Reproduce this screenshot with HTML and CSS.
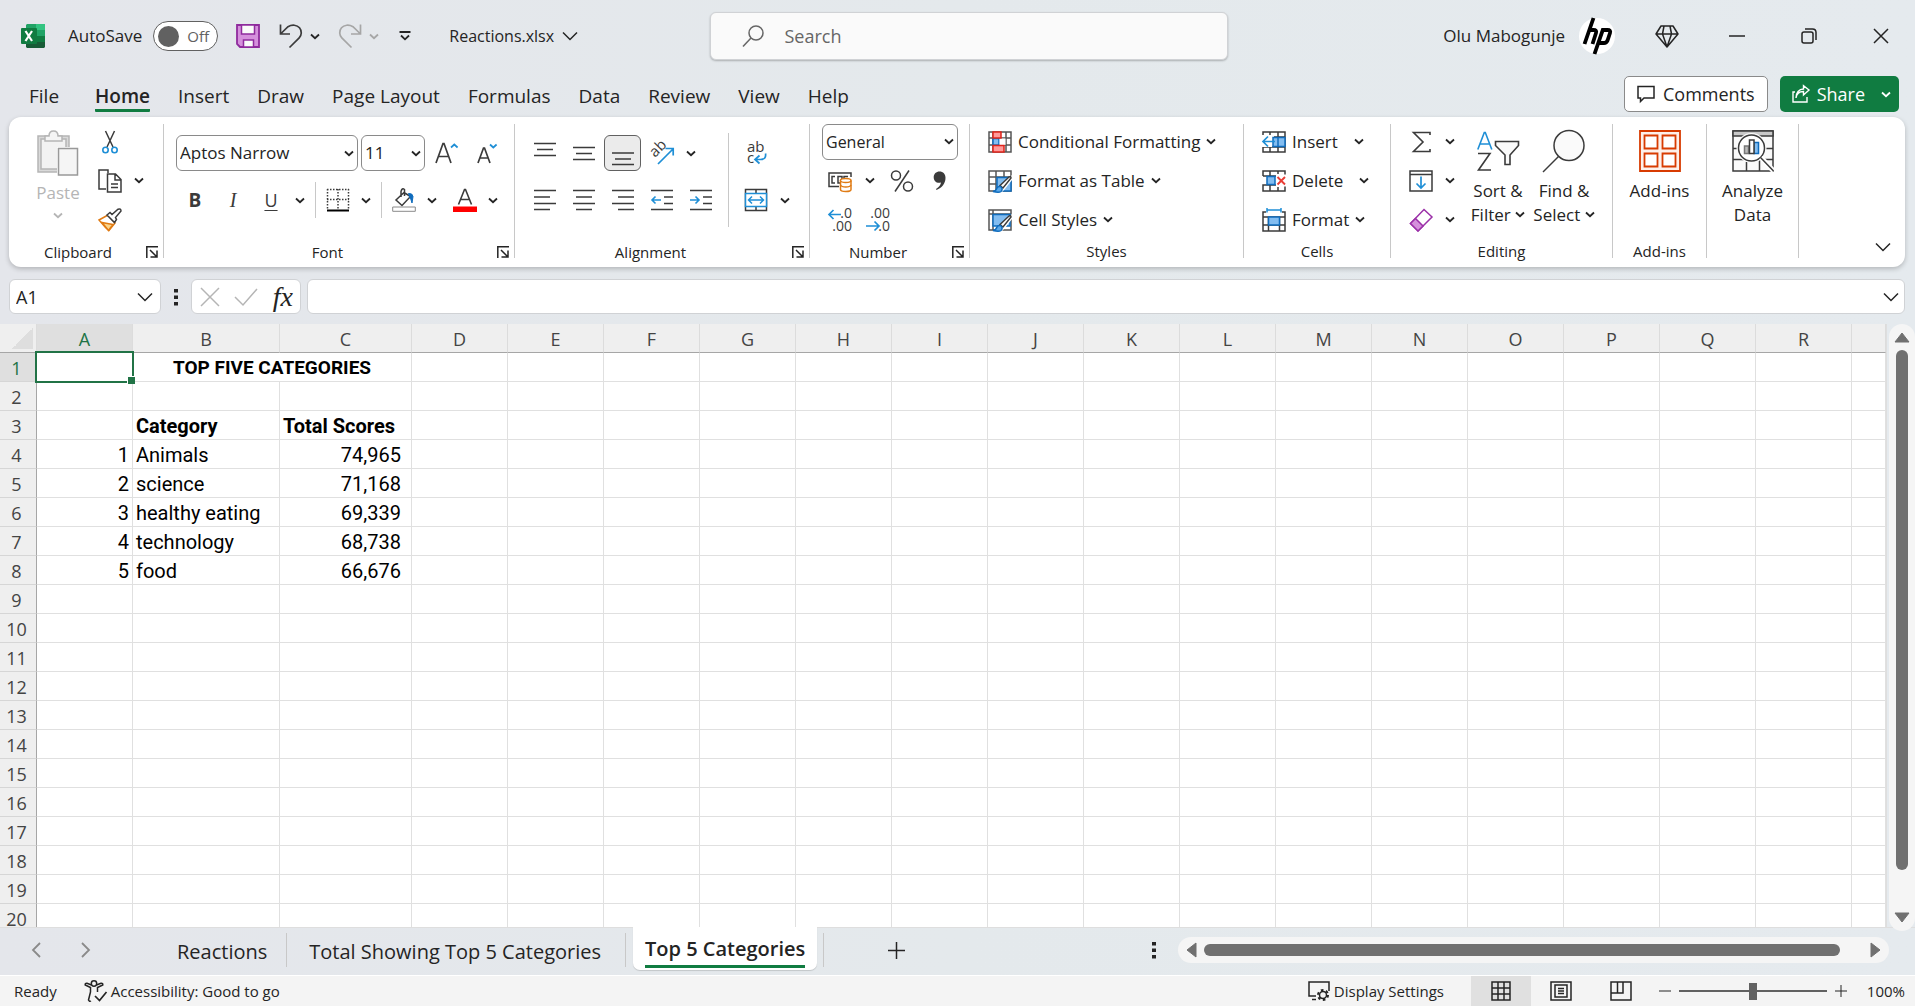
FILE: index.html
```html
<!DOCTYPE html>
<html lang="en">
<head>
<meta charset="utf-8">
<meta name="viewport" content="width=device-width, initial-scale=1">
<title>Reactions.xlsx - Excel</title>
<link rel="stylesheet" href="styles.css">
</head>
<body>
<svg class="sprite" aria-hidden="true">
  <symbol id="chev" viewBox="0 0 10 7"><path d="M1 1.500 5 5.200 9 1.500" fill="none" stroke="currentColor" stroke-width="1.800"/></symbol>
  <symbol id="chev-lg" viewBox="0 0 16 10"><path d="M1 1.500 8 8.500 15 1.500" fill="none" stroke="currentColor" stroke-width="1.500"/></symbol>
  <symbol id="launch" viewBox="0 0 12 12"><path d="M.8 12V.8H12M4 4l6.500 6.500M11 4.500V11H4.500" fill="none" stroke="currentColor" stroke-width="1.500"/></symbol>
  <symbol id="dots" viewBox="0 0 4 18"><path d="M0 1h4v3.500H0zM0 7.500h4V11H0zM0 14h4v3.500H0z" fill="currentColor"/></symbol>
</svg>

<header class="titlebar">
  <div class="title-left">
    <svg class="logo" viewBox="0 0 24 24" width="24" height="24" aria-label="Excel">
      <path d="M6 0h9v12H5V1z" fill="#21a366"/><path d="M15 0h9v6h-9z" fill="#33c481"/><path d="M15 6h9v6h-9z" fill="#21a366"/>
      <path d="M5 12h10v6H5z" fill="#107c41"/><path d="M15 12h9v6h-9z" fill="#107c41"/><path d="M5 18h19v5l-1 1H6l-1-1z" fill="#185c37"/>
      <rect x="0" y="4" width="16" height="16" rx="1" fill="#107c41"/>
      <path d="m4.500 7 6.500 10M11 7 4.500 17" stroke="#fff" stroke-width="2.200"/>
    </svg>
    <label class="autosave" for="autosave">AutoSave</label>
    <span class="toggle"><input type="checkbox" id="autosave"><span class="toggle-text">Off</span></span>
    <button class="plain save" aria-label="Save"><svg viewBox="0 0 24 24" width="24" height="24"><path d="M1 1h22v22H4l-3-3z" fill="#d590dc" stroke="#8f2b9d" stroke-width="1.800"/><path d="M5.500 1h13v9h-13zM7.500 23v-7h10v7z" fill="#fafafa" stroke="#8f2b9d" stroke-width="1.500"/></svg></button>
    <button class="plain undo" aria-label="Undo"><svg viewBox="0 0 24 24" width="24" height="24" fill="none" stroke="#3b3b3b" stroke-width="1.700"><path d="M1.500.5v9.500h9.500M2 9.500 9 2.700C13 .4 18 .8 20.500 3.800c2.500 3 2.300 7.300-.3 10L10.500 23.500"/></svg></button>
    <button class="plain drop" aria-label="Undo history"><svg class="cv"><use href="#chev"/></svg></button>
    <button class="plain redo" aria-label="Redo" disabled><svg viewBox="0 0 24 24" width="24" height="24" fill="none" stroke="#a6a6a6" stroke-width="1.700"><path d="M22.500.5v9.500H13M22 9.500 15 2.700C11 .4 6 .8 3.500 3.800c-2.500 3-2.300 7.300.3 10L13.500 23.500"/></svg></button>
    <button class="plain drop faded" aria-label="Redo history" disabled><svg class="cv"><use href="#chev"/></svg></button>
    <button class="plain customize" aria-label="Customize toolbar"><svg viewBox="0 0 12 10" width="12" height="10" fill="none" stroke="currentColor" stroke-width="1.800"><path d="M.5 1h11M2 4.500l4 3.800 4-3.800"/></svg></button>
    <button class="plain filename">Reactions.xlsx <svg class="cv-lg"><use href="#chev-lg"/></svg></button>
  </div>
  <label class="search">
    <svg viewBox="0 0 22 22" width="22" height="22" fill="none" stroke="#666" stroke-width="1.500"><circle cx="14" cy="8" r="7"/><path d="M9 13 1 21.500"/></svg>
    <input type="text" placeholder="Search" aria-label="Search">
  </label>
  <div class="title-right">
    <span class="user">Olu Mabogunje</span>
    <svg class="avatar" viewBox="0 0 36 36" width="36" height="36" aria-label="hp"><circle cx="18" cy="18" r="18" fill="#fff"/><g fill="none" stroke="#000" stroke-width="3.800"><path d="M14.500 0 5.500 26M11 12h3.500q3.500 0 2.500 3L13.500 26M15.500 36l8.300-24h4.700q3.500 0 2.500 3l-2.500 7.500q-1 2.500-3.500 2.500h-4.500"/></g></svg>
    <button class="plain win gem" aria-label="Premium"><svg viewBox="0 0 24 23" width="24" height="23" fill="none" stroke="currentColor" stroke-width="1.500" stroke-linejoin="round"><path d="M6 1h12l5 8-11 13L1 9zM1 9h22M9 1 7.500 9 12 22 16.500 9 15 1"/></svg></button>
    <button class="plain win" aria-label="Minimize"><svg viewBox="0 0 16 16" width="16" height="16"><path d="M0 8h16" stroke="currentColor" stroke-width="1.500"/></svg></button>
    <button class="plain win" aria-label="Restore"><svg viewBox="0 0 16 16" width="16" height="16" fill="none" stroke="currentColor" stroke-width="1.500"><rect x="1" y="4" width="11" height="11" rx="2"/><path d="M4 1h7.500Q15 1 15 4.500V12"/></svg></button>
    <button class="plain win" aria-label="Close"><svg viewBox="0 0 16 16" width="16" height="16" stroke="currentColor" stroke-width="1.500"><path d="m1 1 14 14M15 1 1 15"/></svg></button>
  </div>
</header>

<nav class="tabs" aria-label="Ribbon tabs">
  <button class="tab">File</button>
  <button class="tab active"><span>Home</span></button>
  <button class="tab">Insert</button>
  <button class="tab">Draw</button>
  <button class="tab">Page Layout</button>
  <button class="tab">Formulas</button>
  <button class="tab">Data</button>
  <button class="tab">Review</button>
  <button class="tab">View</button>
  <button class="tab">Help</button>
  <button class="comments"><svg viewBox="0 0 18 18" width="18" height="18" fill="none" stroke="currentColor" stroke-width="1.500"><path d="M1 1.500h16v11.500H7L3.500 16.500V13H1z"/></svg>Comments</button>
  <button class="share"><svg viewBox="0 0 18 18" width="18" height="18" fill="none" stroke="currentColor" stroke-width="1.400"><path d="M3 7H1v10h14v-5M4 13c.5-4 3-6.500 7.500-6.500V10L17 5l-5.500-4.300V4C7 4 4 7.500 4 13z"/></svg>Share<svg class="cv"><use href="#chev"/></svg></button>
</nav>

<main class="ribbon">
  <section class="group g-clipboard">
    <div class="body">
      <button class="big paste" disabled>
        <svg viewBox="0 0 42 46" width="42" height="46" stroke="#b5b5b5" stroke-width="1.500"><path d="M1 6h31v36H1z" fill="#d9d9d9"/><path d="M4 9h25v30H4z" fill="#f2f2f2"/><path d="M8 11V6h4q0-5 4.500-5T21 6h4v5z" fill="#f5f5f5"/><path d="M20 17h22v29H20z" fill="#fff" stroke="none"/><path d="M21.500 18.500h19V45h-19z" fill="#f5f5f5" stroke="#999"/></svg>
        <span>Paste</span><svg class="cv"><use href="#chev"/></svg>
      </button>
      <div class="stack">
        <div class="row"><button class="ib" aria-label="Cut"><svg viewBox="0 0 24 24" width="24" height="24" fill="none"><path d="M7.500 1 15 17M16.500 1 9 17" stroke="#3b3b3b" stroke-width="1.500"/><circle cx="7.500" cy="20" r="2.700" stroke="#1f8fd6" stroke-width="1.600"/><circle cx="16.500" cy="20" r="2.700" stroke="#1f8fd6" stroke-width="1.600"/></svg></button></div>
        <div class="row"><button class="ib" aria-label="Copy"><svg viewBox="0 0 24 24" width="24" height="24" fill="#fff" stroke="#3b3b3b" stroke-width="1.500"><path d="M10 4V1H1v19h7"/><path d="M9.500 5h8l5.500 5.500V23H9.500zM17 5v6h6M13 15h7M13 18.500h7"/></svg></button><button class="chev" aria-label="Copy options"><svg class="cv"><use href="#chev"/></svg></button></div>
        <div class="row"><button class="ib" aria-label="Format Painter"><svg viewBox="0 0 24 24" width="24" height="24" stroke-width="1.500"><path d="M1 12 10 7l7 8-6 7.500-3.500-3z" fill="#fff" stroke="#e07b14"/><path d="m4 14.500 11 2-4.500 6z" fill="#fbd58b" stroke="#e07b14"/><path d="m9 7 3-2.500 2 2L20 1.200q3-1 3 1.800l-5.500 6.500 1 2-2 3z" fill="#fff" stroke="#3b3b3b"/></svg></button></div>
      </div>
    </div>
    <footer class="label launchable"><span>Clipboard</span><svg class="launcher"><use href="#launch"/></svg></footer>
  </section>
  <i class="sep"></i>

  <section class="group g-font">
    <div class="body two">
      <div class="row">
        <span class="combo c-font"><select aria-label="Font"><option>Aptos Narrow</option></select><svg class="cv"><use href="#chev"/></svg></span>
        <span class="combo c-size"><select aria-label="Font size"><option>11</option></select><svg class="cv"><use href="#chev"/></svg></span>
        <button class="ib grow" aria-label="Increase font size"><svg viewBox="0 0 24 24" width="24" height="24"><path d="M1 22 8 2.500h1L16 22M3.500 15.500h10" fill="none" stroke="#3b3b3b" stroke-width="1.700"/><path d="m16 6.500 3.300-3 3.300 3" fill="none" stroke="#1f8fd6" stroke-width="1.700"/></svg></button>
        <button class="ib" aria-label="Decrease font size"><svg viewBox="0 0 24 24" width="24" height="24"><path d="M3 22 8.500 7h1L15 22M5 17h8" fill="none" stroke="#3b3b3b" stroke-width="1.700"/><path d="m15 3.500 3.300 3 3.300-3" fill="none" stroke="#1f8fd6" stroke-width="1.700"/></svg></button>
      </div>
      <div class="row">
        <button class="ib bold">B</button><button class="ib italic">I</button><button class="ib under">U</button>
        <button class="chev" aria-label="Underline options"><svg class="cv"><use href="#chev"/></svg></button>
        <i class="vr"></i>
        <span class="split"><button class="ib sm" aria-label="Borders"><svg viewBox="0 0 24 24" width="24" height="24" stroke="#3b3b3b" stroke-width="1.500"><path d="M1 1.500h22M1 11.500h22M1.500 1v20M12 1v20M22.500 1v20" stroke-dasharray="1.500 1.500"/><path d="M1 22.500h22" stroke="#000" stroke-width="2"/></svg></button><button class="chev" aria-label="Border options"><svg class="cv"><use href="#chev"/></svg></button></span>
        <i class="vr"></i>
        <span class="split"><button class="ib sm" aria-label="Fill color"><svg viewBox="0 0 24 24" width="24" height="24" fill="none"><path d="M12 4.500 4 12l6 5.500L18.500 8.500zM9 9V3.500Q10-.5 12.500 1.500V8" stroke="#3b3b3b" stroke-width="1.500"/><path d="M16.500 5.500q4-.5 4.500 3L20 15q-1-4-2-5z" fill="#0f6cbd" stroke="#0f6cbd"/><path d="M.7 19h22.600v4.300H.7z" fill="#fff" stroke="#8a8a8a"/></svg></button><button class="chev" aria-label="Fill options"><svg class="cv"><use href="#chev"/></svg></button></span>
        <span class="split far"><button class="ib sm" aria-label="Font color"><svg viewBox="0 0 24 24" width="24" height="24"><path d="m5.500 16.500 6-15h1l6 15M8 11.500h8" fill="none" stroke="#3b3b3b" stroke-width="1.600"/><path d="M0 18.500h24V24H0z" fill="#f00"/></svg></button><button class="chev" aria-label="Font color options"><svg class="cv"><use href="#chev"/></svg></button></span>
      </div>
    </div>
    <footer class="label launchable"><span>Font</span><svg class="launcher"><use href="#launch"/></svg></footer>
  </section>
  <i class="sep"></i>

  <section class="group g-align">
    <div class="body">
      <div class="two pair">
        <div class="row">
          <button class="ib" aria-label="Top align"><svg class="ln" viewBox="0 0 22 22"><path d="M0 1.500h22M3 7.500h16M0 13.500h22"/></svg></button>
          <button class="ib" aria-label="Middle align"><svg class="ln" viewBox="0 0 22 22"><path d="M0 5.500h22M3 11.500h16M0 17.500h22"/></svg></button>
          <button class="ib on" aria-label="Bottom align"><svg class="ln" viewBox="0 0 22 22"><path d="M0 11h22M3 17h16M0 22.500h22"/></svg></button>
          <button class="ib" aria-label="Orientation"><svg viewBox="0 0 24 24" width="24" height="24"><text transform="translate(5 17) rotate(-45)" class="icon-text" font-size="15">ab</text><path d="M8 23 23 8M15.500 7.500H23.200v7" fill="none" stroke="#1f8fd6" stroke-width="1.700"/></svg></button>
          <button class="chev" aria-label="Orientation options"><svg class="cv"><use href="#chev"/></svg></button>
        </div>
        <div class="row">
          <button class="ib" aria-label="Align left"><svg class="ln" viewBox="0 0 22 22"><path d="M0 1.500h22M0 8h16M0 14.500h22M0 20.500h16"/></svg></button>
          <button class="ib" aria-label="Center"><svg class="ln" viewBox="0 0 22 22"><path d="M0 1.500h22M3 8h16M0 14.500h22M3 20.500h16"/></svg></button>
          <button class="ib" aria-label="Align right"><svg class="ln" viewBox="0 0 22 22"><path d="M0 1.500h22M6 8h16M0 14.500h22M6 20.500h16"/></svg></button>
          <button class="ib" aria-label="Decrease indent"><svg class="ln" viewBox="0 0 22 22"><path d="M0 1.500h22M13 8h9M13 14.500h9M0 20.500h22"/><path class="bl" d="M1 11h9M4.500 7.500 1 11l3.500 3.500"/></svg></button>
          <button class="ib" aria-label="Increase indent"><svg class="ln" viewBox="0 0 22 22"><path d="M0 1.500h22M13 8h9M13 14.500h9M0 20.500h22"/><path class="bl" d="M0 11h9M5.500 7.500 9 11l-3.500 3.500"/></svg></button>
        </div>
      </div>
      <i class="vr tall"></i>
      <div class="two">
        <div class="row"><button class="ib" aria-label="Wrap text"><svg viewBox="0 0 24 24" width="24" height="24"><text class="icon-text" font-size="15"><tspan x="3" y="11">ab</tspan><tspan x="3" y="22">c</tspan></text><path d="M21.500 12.500q1 6-5 6H12M15.500 14.500l-4.500 4 4.500 4" fill="none" stroke="#1f8fd6" stroke-width="1.700"/></svg></button></div>
        <div class="row"><button class="ib" aria-label="Merge and center"><svg viewBox="0 0 24 24" width="24" height="24" fill="none" stroke-width="1.500"><path d="M1.500 1.500h21v21h-21zM12 1v5M12 18v5" stroke="#3b3b3b"/><path d="M1.500 5.500h21v13h-21z" fill="#fff" stroke="#1f8fd6"/><path d="M4.500 12h15M8 8.500 4.500 12 8 15.500M16 8.500l3.500 3.500-3.500 3.500" stroke="#1f8fd6"/></svg></button><button class="chev" aria-label="Merge options"><svg class="cv"><use href="#chev"/></svg></button></div>
      </div>
    </div>
    <footer class="label launchable"><span>Alignment</span><svg class="launcher"><use href="#launch"/></svg></footer>
  </section>
  <i class="sep"></i>

  <section class="group g-number">
    <div class="body stack">
      <div class="row"><span class="combo c-num"><select aria-label="Number format"><option>General</option></select><svg class="cv"><use href="#chev"/></svg></span></div>
      <div class="row">
        <button class="ib" aria-label="Accounting format"><svg viewBox="0 0 24 24" width="24" height="24" fill="none" stroke-width="1.500"><path d="M11 17.500H1V4h22v4M7 7.500H4v6.500h3M12 14h-2V7.500h4V10M16 9V7.500h4" stroke="#3b3b3b"/><path d="M12.500 11.500v9q0 2 5.300 2t5.200-2v-9" fill="#fff" stroke="#e07b14"/><ellipse cx="17.700" cy="11.500" rx="5.300" ry="2" fill="#fff" stroke="#e07b14"/><path d="M12.500 16q1 2 5.300 2t5.200-2" stroke="#e07b14"/></svg></button>
        <button class="chev" aria-label="Accounting options"><svg class="cv"><use href="#chev"/></svg></button>
        <button class="ib pct" aria-label="Percent"><svg viewBox="0 0 24 24" width="24" height="24" fill="none" stroke="#3b3b3b" stroke-width="1.500"><circle cx="6" cy="6.500" r="4.500"/><circle cx="18" cy="17.500" r="4.500"/><path d="M19 1.500 5 22.500"/></svg></button>
        <button class="ib" aria-label="Comma style"><svg viewBox="0 0 24 24" width="24" height="24"><path d="M11.500 2.500c3.700 0 6 2.700 6 6.200 0 6-3.500 9.800-9 12.300l-.5-1c3-2 4.700-4 5-6.500-4 1.200-7.300-1.300-7.300-5.300 0-3.300 2.500-5.700 5.800-5.700z" fill="#3b3b3b"/></svg></button>
      </div>
      <div class="row">
        <button class="ib" aria-label="Increase decimal"><svg viewBox="0 0 24 24" width="24" height="24"><text text-anchor="end" class="icon-text" font-size="14"><tspan x="24" y="10">.0</tspan><tspan x="24" y="23">.00</tspan></text><path d="M1 6.500h12M5.500 2 1 6.500 5.500 11" fill="none" stroke="#1f8fd6" stroke-width="1.700"/></svg></button>
        <button class="ib" aria-label="Decrease decimal"><svg viewBox="0 0 24 24" width="24" height="24"><text text-anchor="end" class="icon-text" font-size="14"><tspan x="24" y="10">.00</tspan><tspan x="24" y="23">.0</tspan></text><path d="M0 18h13M8.500 13.500l4.500 4.500-4.500 4.500" fill="none" stroke="#1f8fd6" stroke-width="1.700"/></svg></button>
      </div>
    </div>
    <footer class="label launchable"><span>Number</span><svg class="launcher"><use href="#launch"/></svg></footer>
  </section>
  <i class="sep"></i>

  <section class="group g-styles">
    <div class="body stack">
      <button class="cmd"><svg viewBox="0 0 24 24" width="24" height="24" fill="none" stroke-width="1.500"><path d="M1 2h22v20H1zM1 8h22M1 15h22M5 2v20M18 2v20" stroke="#555"/><path d="M5 8.500h6V15H5z" fill="#83bdf0" stroke="#0f6cbd" /><path d="M11.500 8.500h6V15h-6z" fill="#fff"/><path d="M5 2h8v6H5zM5 15.500h11V22H5z" fill="#ff9a9a" stroke="#e0241b"/></svg>Conditional Formatting<svg class="cv"><use href="#chev"/></svg></button>
      <button class="cmd"><svg viewBox="0 0 24 24" width="24" height="24" fill="none" stroke-width="1.500"><path d="M1 2h22v20H1zM1 8h22M1 15h8M8 2v20M16 2v6" stroke="#555"/><path d="M9 8.500h14V22H9z" fill="#83bdf0" stroke="#0f6cbd"/><path d="M24 6 11 18l-5 5 7 1 4-4 7-9z" fill="#fff"/><path d="m12 16.500 9-8.500q2-1 2 1l-8 10z" fill="#fff" stroke="#3b3b3b"/><path d="M5 22.500q3-.5 4-3.500 1-2 3.500-1.500 3 2.500.5 5-2 1.500-8 0z" fill="#5aa7e8" stroke="#0f6cbd"/></svg>Format as Table<svg class="cv"><use href="#chev"/></svg></button>
      <button class="cmd"><svg viewBox="0 0 24 24" width="24" height="24" fill="none" stroke-width="1.500"><path d="M1 2h22v20H1zM1 6h22M5 2v20" stroke="#555"/><path d="M5 6.500h17V18H5z" fill="#83bdf0" stroke="#0f6cbd"/><path d="M24 6 11 18l-6 5 8 1 4-4 7-9z" fill="#fff"/><path d="m12 16.500 9-8.500q2-1 2 1l-8 10z" fill="#fff" stroke="#3b3b3b"/><path d="M5 22.500q3-.5 4-3.500 1-2 3.500-1.500 3 2.500.5 5-2 1.500-8 0z" fill="#5aa7e8" stroke="#0f6cbd"/></svg>Cell Styles<svg class="cv"><use href="#chev"/></svg></button>
    </div>
    <footer class="label">Styles</footer>
  </section>
  <i class="sep"></i>

  <section class="group g-cells">
    <div class="body stack">
      <button class="cmd wide"><svg viewBox="0 0 24 24" width="24" height="24" fill="none" stroke-width="1.500"><path d="M1 5V2h22v20H1v-5M8 2v3M16 2v20M8 17v5M1 17h22M12 7h11" stroke="#3b3b3b"/><path d="M11 7.500h12v9H11z" fill="#83bdf0" stroke="#0f6cbd"/><path d="M16 7.500v9" stroke="#0f6cbd"/><path d="M0 6h10v11H0z" fill="#fff"/><path d="M1 11.500h12M6 6.500l-5 5 5 5" stroke="#1f8fd6" stroke-width="1.700"/></svg>Insert<svg class="cv"><use href="#chev"/></svg></button>
      <button class="cmd wide"><svg viewBox="0 0 24 24" width="24" height="24" fill="none" stroke-width="1.500"><path d="M1 7V2h22v5H1M8 2v5M16 2v3M1 16h22v6H1zM8 16v6M16 18v4" stroke="#3b3b3b"/><path d="M5 7.500h8v8H5z" fill="#83bdf0" stroke="#0f6cbd"/><path d="M14 5.500h10v12H14z" fill="#fff"/><path d="m15.500 8 7.500 7.500M23 8l-7.500 7.500" stroke="#e93d35" stroke-width="1.900"/></svg>Delete<svg class="cv"><use href="#chev"/></svg></button>
      <button class="cmd"><svg viewBox="0 0 24 24" width="24" height="24" fill="none" stroke-width="1.500"><path d="M4 4H1v19h22V4h-3M1 9h22M1 17h22M6.500 9v14M17.500 9v14" stroke="#3b3b3b"/><path d="M6.500 9h11v8h-11z" fill="#83bdf0" stroke="#0f6cbd"/><path d="M5 2h14M5 0v4.500M19 0v4.500" stroke="#1f8fd6"/></svg>Format<svg class="cv"><use href="#chev"/></svg></button>
    </div>
    <footer class="label">Cells</footer>
  </section>
  <i class="sep"></i>

  <section class="group g-edit">
    <div class="body">
      <div class="stack">
        <div class="row"><button class="ib" aria-label="AutoSum"><svg viewBox="0 0 24 24" width="24" height="24" fill="none" stroke="#3b3b3b" stroke-width="1.600"><path d="M21 5V2.500H4.500L14 12l-9.500 9.500H21V19"/></svg></button><button class="chev" aria-label="AutoSum options"><svg class="cv"><use href="#chev"/></svg></button></div>
        <div class="row"><button class="ib" aria-label="Fill"><svg viewBox="0 0 24 24" width="24" height="24" fill="none" stroke="#3b3b3b" stroke-width="1.500"><path d="M1 2h22v20H1zM1 5.500h22"/><path d="M12 7.500v11M7.500 14.500l4.500 4.500 4.500-4.500" stroke="#1f8fd6" stroke-width="1.700"/></svg></button><button class="chev" aria-label="Fill options"><svg class="cv"><use href="#chev"/></svg></button></div>
        <div class="row"><button class="ib" aria-label="Clear"><svg viewBox="0 0 24 24" width="24" height="24" stroke="#9b30a8" stroke-width="1.500"><path d="M15 1.500 23 9 9 23 1.500 15.500z" fill="#fff"/><path d="M6.500 10.500 14 18l-5 5-7.500-7.500z" fill="#d590dc"/></svg></button><button class="chev" aria-label="Clear options"><svg class="cv"><use href="#chev"/></svg></button></div>
      </div>
      <button class="big sort"><svg viewBox="0 0 42 42" width="42" height="42" fill="none" stroke-width="1.600"><path d="m.8 19.500 6.500-17h1l6.500 17M3 14h9.500" stroke="#1f8fd6"/><path d="M1 23.500h12L1.500 40H14" stroke="#3b3b3b"/><path d="M18.500 11.500h23v4L33 25v9.500h-5V25l-9.500-9.500z" fill="#fafafa" stroke="#3b3b3b"/></svg><span>Sort &amp;<br>Filter <svg class="cv"><use href="#chev"/></svg></span></button>
      <button class="big"><svg viewBox="0 0 42 42" width="42" height="42" fill="none" stroke="#3b3b3b" stroke-width="1.500"><circle cx="26" cy="15.500" r="15" fill="#fafafa"/><path d="M15.500 26.500 0 42"/></svg><span>Find &amp;<br>Select <svg class="cv"><use href="#chev"/></svg></span></button>
    </div>
    <footer class="label">Editing</footer>
  </section>
  <i class="sep"></i>

  <section class="group g-addins">
    <div class="body center"><button class="big"><svg viewBox="0 0 42 42" width="42" height="42" fill="none" stroke="#d83b01"><path d="M1 1h40v40H1z" fill="#fdf0ea" stroke-width="1.800"/><path d="M5.500 5.500h13v13h-13zM23.500 5.500h13v13h-13zM5.500 23.500h13v13h-13zM23.500 23.500h13v13h-13z" fill="#fff" stroke-width="1.800"/></svg><span>Add-ins</span></button></div>
    <footer class="label">Add-ins</footer>
  </section>
  <i class="sep"></i>

  <section class="group g-analyze">
    <div class="body center"><button class="big"><svg viewBox="0 0 42 42" width="42" height="42" fill="none" stroke="#3b3b3b" stroke-width="1.500"><path d="M1 1h40v40H1z" fill="#fafafa"/><path d="M1 1h40v5H1z" fill="#c8c8c8"/><path d="M1 18.500h6M34 18.500h7M1 29.500h40M14.500 32v9M27.500 29v12"/><circle cx="19.500" cy="18" r="15" fill="#fafafa" stroke="none"/><circle cx="19.500" cy="18" r="13" fill="#fff"/><path d="m29 27.500 12.500 13.500" stroke="#fff" stroke-width="5"/><path d="M28.500 27.500 41.500 41"/><path d="M12.500 16h4v7.500h-4z" fill="#bbb" stroke="#777"/><path d="M22 12.500h4.500v11H22z" fill="#83bdf0" stroke="#0f6cbd"/><path d="M17.500 10h4.500v13.500h-4.500z" fill="#fff"/></svg><span>Analyze<br>Data</span></button></div>
  </section>
  <i class="sep"></i>
  <button class="plain collapse" aria-label="Collapse ribbon"><svg class="cv-lg"><use href="#chev-lg"/></svg></button>
</main>

<div class="formula-bar">
  <div class="namebox"><input type="text" value="A1" aria-label="Name box"><svg class="cv-lg"><use href="#chev-lg"/></svg></div>
  <svg class="dots"><use href="#dots"/></svg>
  <div class="fx">
    <button class="plain" aria-label="Cancel" disabled><svg viewBox="0 0 20 18" width="20" height="18" stroke="#b5b5b5" stroke-width="1.500"><path d="m1 0 18 18M19 0 1 18"/></svg></button>
    <button class="plain" aria-label="Enter" disabled><svg viewBox="0 0 24 18" width="24" height="18" fill="none" stroke="#b5b5b5" stroke-width="1.500"><path d="m1 9 8 8L23 1"/></svg></button>
    <button class="plain fn" aria-label="Insert function">fx</button>
  </div>
  <div class="formula"><input type="text" aria-label="Formula"><svg class="cv-lg"><use href="#chev-lg"/></svg></div>
</div>

<div class="sheet">
  <div class="grid">
    <table id="cells">
      <colgroup id="cols"></colgroup>
      <thead><tr id="heads"></tr></thead>
      <tbody id="rows"></tbody>
    </table>
  </div>
  <div class="vscroll">
    <svg viewBox="0 0 16 11" width="16" height="11"><path d="M8 1 15 10H1z" fill="#707070" stroke="#707070" stroke-linejoin="round"/></svg>
    <span class="thumb"></span>
    <svg viewBox="0 0 16 11" width="16" height="11"><path d="M8 10 1 1h14z" fill="#707070" stroke="#707070" stroke-linejoin="round"/></svg>
  </div>
</div>

<div class="sheetbar">
  <button class="plain nav" aria-label="Previous sheet"><svg viewBox="0 0 9 16" width="9" height="16" fill="none" stroke="#8a8a8a" stroke-width="1.800"><path d="M8 1 1 8l7 7"/></svg></button>
  <button class="plain nav" aria-label="Next sheet"><svg viewBox="0 0 9 16" width="9" height="16" fill="none" stroke="#8a8a8a" stroke-width="1.800"><path d="m1 1 7 7-7 7"/></svg></button>
  <button class="stab first">Reactions</button><i class="vr"></i>
  <button class="stab">Total Showing Top 5 Categories</button><i class="vr"></i>
  <button class="stab current"><span>Top 5 Categories</span></button><i class="vr"></i>
  <button class="plain add" aria-label="New sheet"><svg viewBox="0 0 17 17" width="17" height="17" stroke="currentColor" stroke-width="1.500"><path d="M8.500 0v17M0 8.500h17"/></svg></button>
  <svg class="dots"><use href="#dots"/></svg>
  <div class="hscroll">
    <svg viewBox="0 0 11 16" width="11" height="16"><path d="M1 8 10 1v14z" fill="#707070" stroke="#707070" stroke-linejoin="round"/></svg>
    <span class="thumb"></span>
    <svg viewBox="0 0 11 16" width="11" height="16"><path d="M10 8 1 1v14z" fill="#707070" stroke="#707070" stroke-linejoin="round"/></svg>
  </div>
</div>

<footer class="status">
  <span>Ready</span>
  <button class="plain access"><svg viewBox="0 0 24 22" width="24" height="22" fill="none" stroke="currentColor" stroke-width="1.500"><circle cx="10" cy="3.500" r="2.700"/><path d="M7.500 5 3 3.200Q1 3 1.200 5l5.300 2.500V12L4.500 20q1 2 2.500 1M12.500 5 17 3.200q2-.2 1.800 1.800L13.500 7.500V12"/><path d="m11 16 4.500 4.500L22.500 12" stroke-width="1.700"/></svg>Accessibility: Good to go</button>
  <button class="plain display"><svg viewBox="0 0 22 20" width="22" height="20" fill="none" stroke="currentColor" stroke-width="1.500"><path d="M8 15H1V1h20v9M4 18.500h4"/><circle cx="15" cy="14" r="3.500"/><circle cx="15" cy="14" r="5" stroke-dasharray="2.600 2.600" stroke-width="2"/></svg>Display Settings</button>
  <button class="plain view on" aria-label="Normal view"><svg viewBox="0 0 20 20" width="20" height="20" fill="none" stroke="currentColor" stroke-width="1.500"><path d="M1 1h18v18H1zM1 7h18M1 13h18M7 1v18M13 1v18"/></svg></button>
  <button class="plain view" aria-label="Page layout view"><svg viewBox="0 0 22 20" width="22" height="20" fill="none" stroke="currentColor" stroke-width="1.500"><path d="M1 1h20v18H1zM5 4h12v12H5zM8 7.500h6M8 10h6M8 12.500h6"/></svg></button>
  <button class="plain view" aria-label="Page break view"><svg viewBox="0 0 22 20" width="22" height="20" fill="none" stroke="currentColor" stroke-width="1.500"><path d="M1 1h20v18H1zM1 12h12V1M7.500 1v11"/></svg></button>
  <button class="plain zoom" aria-label="Zoom out"><svg viewBox="0 0 12 12" width="12" height="12" stroke="currentColor"><path d="M0 6h12"/></svg></button>
  <input type="range" min="0" max="100" value="50" aria-label="Zoom">
  <button class="plain zoom" aria-label="Zoom in"><svg viewBox="0 0 12 12" width="12" height="12" stroke="currentColor"><path d="M0 6h12M6 0v12"/></svg></button>
  <span class="percent">100%</span>
</footer>
<script src="grid.js"></script>
</body>
</html>
```
FILE: grid.js
```js
const letters = "ABCDEFGHIJKLMNOPQR".split("");
const widths = { A: 96, B: 147, C: 132 };
const data = {
  3: ["", "Category", "Total Scores"],
  4: ["1", "Animals", "74,965"],
  5: ["2", "science", "71,168"],
  6: ["3", "healthy eating", "69,339"],
  7: ["4", "technology", "68,738"],
  8: ["5", "food", "66,676"]
};

const make = (tag, text, cls) => {
  const el = document.createElement(tag);
  if (text) el.textContent = text;
  if (cls) el.className = cls;
  return el;
};

const cols = document.getElementById("cols");
const heads = document.getElementById("heads");
const rows = document.getElementById("rows");

cols.append(make("col", "", "col-num"));
heads.append(make("td", "", "corner"));
letters.forEach(letter => {
  const col = make("col");
  col.style.width = (widths[letter] || 96) + "px";
  cols.append(col);
  heads.append(make("th", letter, letter === "A" ? "selected" : ""));
});
cols.append(make("col"));
heads.append(make("th"));

for (let r = 1; r <= 20; r++) {
  const tr = make("tr");
  tr.append(make("th", String(r), r === 1 ? "selected" : ""));
  for (let c = 0; c <= letters.length; c++) {
    let td;
    if (r === 1 && c === 1) {
      td = make("td", "TOP FIVE CATEGORIES", "title");
      td.colSpan = 2;
      c++;
    } else {
      td = make("td", data[r] ? data[r][c] : "");
      if (r === 1 && c === 0) td.className = "cursor";
      else if (r === 3) td.className = "strong";
      else if (r > 3 && c === 0) td.className = "num";
      else if (r > 3 && c === 2) td.className = "num score";
    }
    tr.append(td);
  }
  rows.append(tr);
}
```
FILE: styles.css
```css
* { box-sizing: border-box; }

body {
  margin: 0;
  height: 100vh;
  display: flex;
  flex-direction: column;
  overflow: hidden;
  background: linear-gradient(90deg, #e4e6eb, #e4e9ec 50%, #e5eaee);
  color: #242424;
  font: 17px/24px "Open Sans", "Noto Sans", sans-serif;
}

button, input, select { font: inherit; color: inherit; }
button { border: 0; background: none; padding: 0; white-space: nowrap; }
svg { display: block; flex: none; overflow: visible; }
.sprite { width: 0; height: 0; position: absolute; }
.cv { width: 10px; height: 7px; }
.cv-lg { width: 16px; height: 10px; }
.dots { width: 4px; height: 18px; }
.plain { display: flex; align-items: center; justify-content: center; }

/* Title bar */
.titlebar { display: grid; grid-template-columns: 371fr 270fr 359fr; align-items: center; height: 72px; flex: none; }
.title-left, .title-right { display: flex; align-items: center; }
.title-left { padding-left: 21px; }
.title-right { justify-content: flex-end; gap: 4px; }
.autosave { margin: 0 11px 0 23px; }
.toggle { display: flex; align-items: center; width: 65px; height: 30px; border: 1px solid #616161; border-radius: 15px; background: #fff; padding-left: 4px; font-size: 15px; color: #616161; gap: 8px; }
.toggle input { appearance: none; margin: 0; width: 21px; height: 21px; border-radius: 50%; background: #616161; }
.save { margin-left: 18px; }
.undo { margin-left: 19px; }
.redo { margin-left: 11px; }
.drop { width: 24px; }
.faded { color: #a6a6a6; }
.customize { margin-left: 13px; }
.filename { margin-left: 38px; gap: 8px; font-size: 16px; }
.search { display: flex; align-items: center; gap: 20px; height: 48px; padding-left: 31px; background: #fafafa; border: 1px solid #d0d2d5; border-radius: 6px; box-shadow: 0 1px 2px rgba(0,0,0,.25); }
.search input { border: 0; background: none; outline: 0; flex: 1; min-width: 0; padding: 0; font-size: 18px; }
.search input::placeholder { color: #666; opacity: 1; }
.user { margin-right: 10px; }
.avatar { margin-right: 16px; }
.win { width: 68px; height: 48px; }
.title-right .gem { width: 64px; }

/* Ribbon tabs */
.tabs { display: flex; align-items: flex-start; height: 45px; padding: 4px 16px 0 15px; flex: none; }
.tab { height: 36px; padding: 0 14px; font-size: 19px; line-height: 40px; }
.tab.active { margin-left: 8px; font-weight: 600; }
.tab.active span { display: block; height: 36px; border-bottom: 3px solid #107c41; border-radius: 1px; }
.comments, .share { display: flex; align-items: center; height: 36px; border-radius: 5px; font-size: 18px; }
.comments { margin-left: auto; gap: 8px; padding: 0 12px; background: #fff; border: 1px solid #8a8a8a; }
.share { margin-left: 12px; gap: 7px; padding: 0 8px 0 12px; background: #107c41; color: #fff; }
.share .cv { margin-left: 9px; }

/* Ribbon */
.ribbon { display: flex; margin: 0 10px 0 9px; height: 150px; flex: none; background: #fff; border-radius: 12px; box-shadow: 0 2px 5px rgba(0,0,0,.22); }
.sep { flex: none; width: 1px; margin: 7px 0 9px; background: #c8c8c8; }
.group { flex: none; display: flex; flex-direction: column; }
.g-clipboard { width: 154px; }
.g-font { width: 350px; }
.g-align { width: 294px; }
.g-number { width: 159px; }
.g-styles { width: 273px; }
.g-cells { width: 146px; }
.g-edit { width: 221px; }
.g-addins { width: 93px; }
.g-analyze { width: 91px; }
.body { display: flex; height: 123px; }
.body.center { justify-content: center; }
.label { display: flex; align-items: center; justify-content: center; height: 22px; font-size: 15px; }
.label.launchable { display: grid; grid-template-columns: 1fr 23px; justify-items: center; }
.g-clipboard .label { padding-left: 7px; }
.launcher { width: 12px; height: 12px; }
.stack { display: flex; flex-direction: column; padding-top: 5px; }
.row { display: flex; align-items: center; height: 39px; }
.two { display: flex; flex-direction: column; gap: 11px; padding-top: 18px; }
.two .row { height: 36px; }
.ib { display: flex; align-items: center; justify-content: center; width: 39px; height: 36px; color: #3b3b3b; flex: none; }
.g-font .ib { width: 38px; }
.g-font .ib.sm { width: 33px; }
.ib.on { width: 37px; margin: 0 1px; background: #ebebeb; border: 1px solid #616161; border-radius: 6px; }
.chev { display: flex; align-items: center; justify-content: center; width: 20px; height: 36px; flex: none; }
.split { display: flex; gap: 2px; }
.far { margin-left: 6px; }
.vr { flex: none; width: 1px; height: 36px; margin: 0 5px; background: #c8c8c8; }
.vr.tall { height: 94px; margin: 16px 7px 0; }
.ln { width: 22px; height: 22px; fill: none; stroke: #3b3b3b; stroke-width: 1.600px; }
.bl { stroke: #1f8fd6; }
.icon-text { fill: #3b3b3b; font-family: "Open Sans", sans-serif; }
.bold { font-size: 19px; font-weight: 700; }
.italic { font: italic 20px "Liberation Serif", serif; }
.under { text-decoration: underline; font-size: 18px; text-underline-offset: 3px; }

.big { display: flex; flex-direction: column; align-items: center; padding-top: 13px; gap: 7px; height: 123px; min-width: 66px; }
.big span { line-height: 24px; }
.big span .cv { display: inline-block; margin-bottom: 3px; }
.paste { gap: 5px; color: #b5b5b5; width: 60px; margin: 0 2px 0 19px; min-width: 0; }
.paste span { margin-bottom: 2px; }
.g-font .body { padding-left: 12px; }
.combo { display: grid; align-items: center; height: 36px; }
.combo > * { grid-area: 1 / 1; }
.combo .cv { justify-self: end; margin-right: 4px; pointer-events: none; }
.combo select { appearance: none; width: 100%; height: 36px; padding: 0 0 0 3px; background: #fff; border: 1px solid #8a8a8a; border-radius: 6px; }
.c-font { width: 182px; margin-right: 3px; }
.c-size { width: 64px; }
.c-num { width: 136px; }
.c-num select { font-size: 16px; }
.grow { margin: 0 2px 0 3px; }
.g-align .body { padding-left: 10px; }
.pair { width: 196px; }
.g-number .body { padding-left: 12px; }
.g-number .ib { margin-left: -2px; width: 40px; }
.g-number .pct { margin-left: 2px; }
.cmd { display: flex; align-items: center; gap: 6px; height: 39px; padding-left: 18px; }
.cmd.wide .cv { margin-left: 10px; }
.g-edit .stack { padding-left: 10px; }
.sort { margin-left: 5px; }
.collapse { margin: 118px 14px 0 auto; height: 24px; }

/* Formula bar */
.formula-bar { display: flex; align-items: center; height: 35px; margin: 12px 10px 10px 9px; flex: none; }
.namebox, .fx, .formula { display: flex; align-items: center; height: 35px; background: #fff; border: 1px solid #d0d2d5; border-radius: 6px; }
.namebox { width: 152px; padding: 0 7px 0 6px; font-size: 18px; }
.namebox input, .formula input { border: 0; outline: 0; background: none; padding: 0; flex: 1; min-width: 0; }
.formula-bar .dots { margin: 0 13px; }
.fx { width: 110px; justify-content: space-between; padding: 0 7px 0 8px; }
.fn { font: italic 28px "Liberation Serif", serif; color: #242424; }
.formula { flex: 1; margin-left: 6px; padding-right: 5px; }

/* Sheet */
.sheet { display: flex; flex: 1; min-height: 0; }
.grid { flex: 1; min-width: 0; overflow: hidden; background: #fff; border-right: 1px solid #dedede; }
table { table-layout: fixed; width: 100%; border-collapse: separate; border-spacing: 0; }
.col-num { width: 37px; }
tr { height: 29px; }
td, th { padding: 2px 3px 0; height: 29px; border: solid #e0e0e0; border-width: 0 1px 1px 0; line-height: 26px; white-space: nowrap; font-weight: 400; text-align: left; }
td { font-family: Roboto, sans-serif; font-size: 20px; color: #000; }
thead th, thead td { background: #efefef; border-bottom-color: #a6a6a6; border-right-color: #dcdcdc; }
th { background: #efefef; color: #444; text-align: center; font-size: 18px; }
tbody th { padding: 2px 3px 0 0; border-right-color: #a6a6a6; border-bottom-color: #d6d6d6; }
th.selected { background: #dfdfdf; color: #217346; }
.corner { background: linear-gradient(135deg, #efefef 50%, #dedede 50%) 12px 4px / 21px 21px no-repeat #efefef; }
.num { text-align: right; }
.score { padding-right: 10px; }
.strong, .title { font-weight: 700; }
.title { text-align: center; font-size: 19px; }
.cursor { position: relative; }
.cursor::before { content: ""; position: absolute; inset: -2px; border: 2px solid #217346; }
.cursor::after { content: ""; position: absolute; right: -3px; bottom: -3px; width: 7px; height: 7px; background: #217346; border: solid #fff; border-width: 1px 0 0 1px; }
.vscroll { display: flex; flex-direction: column; align-items: center; width: 26px; margin: 0 0 -4px 2px; padding: 8px 0; background: #f5f5f5; border-radius: 13px; z-index: 1; }
.vscroll .thumb { flex: none; width: 12px; height: 88%; margin: 7px 0 auto; border-radius: 6px; background: #707070; }

/* Sheet tabs */
.sheetbar { display: flex; align-items: center; height: 48px; flex: none; padding: 0 26px 3px 12px; border-top: 1px solid #dedede; }
.nav { width: 49px; height: 40px; }
.sheetbar .vr { height: 34px; margin: 0; }
.stab { font-size: 20px; padding: 0 24px 0 22px; height: 44px; line-height: 48px; }
.stab.first { margin-left: 45px; padding-right: 19px; }
.stab.current { align-self: flex-start; height: 43px; margin: -1px 6px 0 7px; padding: 0 12px; background: #fff; border-radius: 0 0 7px 7px; box-shadow: 0 1px 1px rgba(0,0,0,.15); font-weight: 600; line-height: 37px; }
.current span { display: block; height: 38px; border-bottom: 3px solid #107c41; }
.add { width: 144px; height: 40px; }
.sheetbar .dots { margin-left: auto; margin-right: 22px; }
.hscroll { display: flex; align-items: center; width: 711px; height: 26px; padding: 0 8px; background: #f5f5f5; border-radius: 13px; }
.hscroll .thumb { width: 636px; height: 12px; margin: 0 auto 0 7px; border-radius: 6px; background: #707070; }

/* Status bar */
.status { display: flex; align-items: center; height: 31px; flex: none; padding: 0 10px 0 14px; background: #f4f4f4; border-top: 1px solid #fff; font-size: 15px; }
.access { margin-left: 27px; gap: 3px; }
.display { margin-left: auto; margin-right: 27px; gap: 4px; }
.view { width: 60px; height: 30px; }
.view.on { background: #e0e0e0; }
.zoom { width: 28px; height: 30px; }
.status input { appearance: none; width: 148px; height: 20px; margin: 0; background: linear-gradient(#616161, #616161) center / 100% 2px no-repeat; }
.status input::-webkit-slider-thumb { appearance: none; width: 8px; height: 17px; background: #616161; border: 0; }
.percent { width: 50px; text-align: right; }
```
